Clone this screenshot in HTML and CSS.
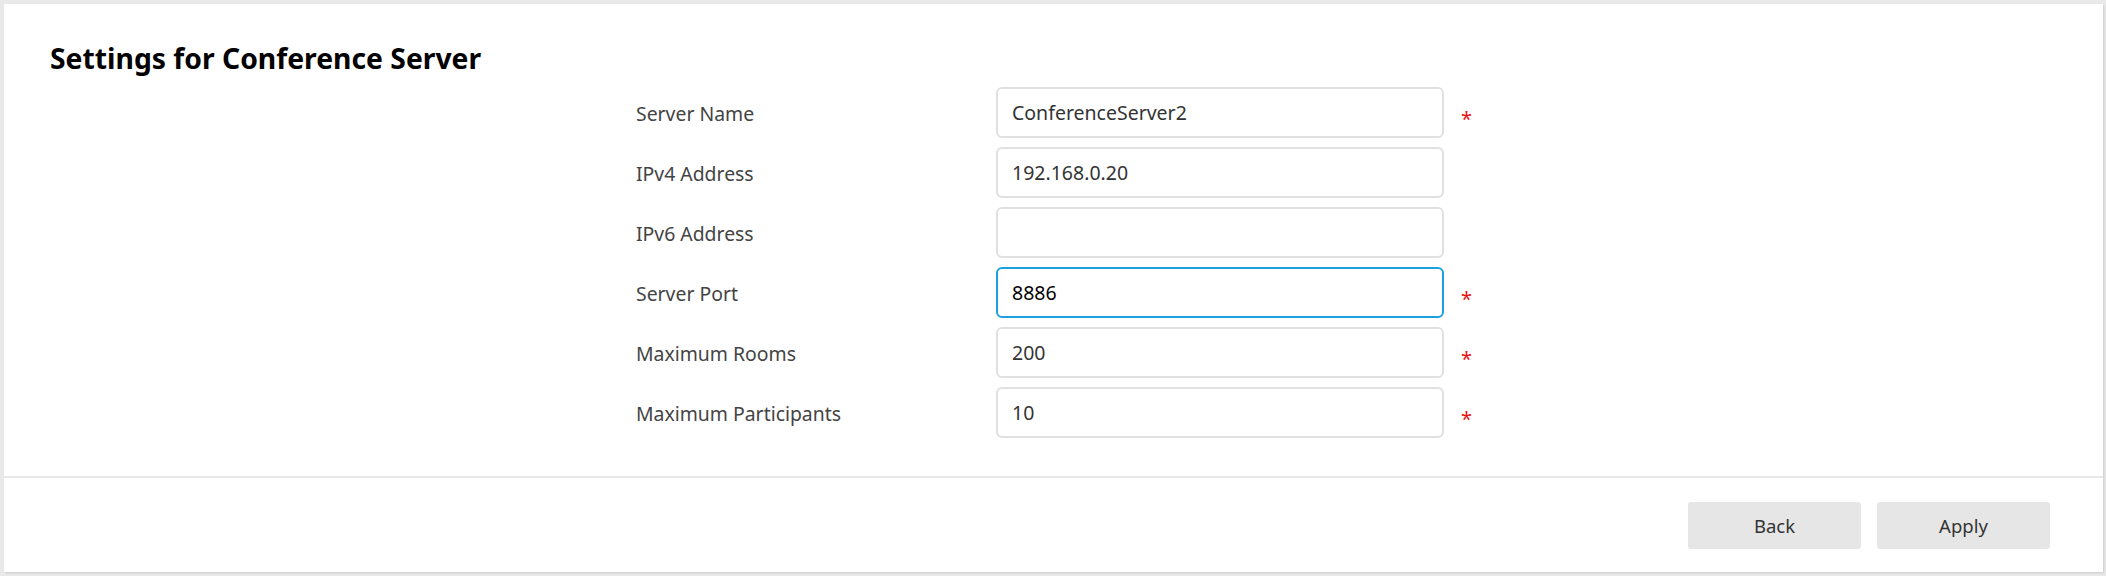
FILE: index.html
```html
<!DOCTYPE html>
<html lang="en">
<head>
<meta charset="utf-8">
<title>Settings for Conference Server</title>
<link rel="stylesheet" href="styles.css">
</head>
<body>
<div class="panel">
  <div class="content">
    <h1 class="title">Settings for Conference Server</h1>
    <form class="form">
      <label class="label" for="f1">Server Name</label>
      <input class="input" id="f1" type="text" value="ConferenceServer2">
      <span class="req">*</span>

      <label class="label" for="f2">IPv4 Address</label>
      <input class="input" id="f2" type="text" value="192.168.0.20">
      <span class="req"></span>

      <label class="label" for="f3">IPv6 Address</label>
      <input class="input" id="f3" type="text" value="">
      <span class="req"></span>

      <label class="label" for="f4">Server Port</label>
      <input class="input input-focus" id="f4" type="text" value="8886">
      <span class="req">*</span>

      <label class="label" for="f5">Maximum Rooms</label>
      <input class="input" id="f5" type="text" value="200">
      <span class="req">*</span>

      <label class="label" for="f6">Maximum Participants</label>
      <input class="input" id="f6" type="text" value="10">
      <span class="req">*</span>
    </form>
  </div>
  <div class="footer">
    <button class="btn" type="button">Back</button>
    <button class="btn" type="button">Apply</button>
  </div>
</div>
</body>
</html>
```
FILE: styles.css
```css
* { box-sizing: border-box; }
html, body {
  margin: 0;
  padding: 0;
  background: #e9e9e9;
  font-family: "Noto Sans", "Open Sans", sans-serif;
}
body { padding: 4px; height: 576px; }
.panel {
  width: 2099px;
  height: 568px;
  background: #fff;
  box-shadow: 1px 1px 2px rgba(0,0,0,0.12);
  display: flex;
  flex-direction: column;
}
.content {
  height: 474px;
  border-bottom: 2px solid #e8e8e8;
}
.title {
  margin: 0;
  padding: 35px 0 0 46px;
  font-size: 28.3px;
  line-height: 38px;
  font-weight: 700;
  color: #000;
}
.form {
  margin-top: 10px;
  padding-left: 3px;
  display: grid;
  grid-template-columns: 360px 448px 30px;
  grid-auto-rows: 51px;
  row-gap: 9px;
  justify-content: center;
  align-items: center;
}
.label {
  font-size: 19.4px;
  color: #444;
  padding-top: 1px;
}
.input {
  height: 51px;
  width: 448px;
  border: 2px solid #e0e0e0;
  border-radius: 6px;
  padding: 0 14px;
  font-family: inherit;
  font-size: 19.5px;
  color: #333;
  background: #fff;
  outline: none;
}
.input-focus {
  border-color: #1ba1e2;
  color: #000;
}
.req {
  color: #ee1111;
  font-size: 20px;
  padding-left: 17px;
  padding-top: 12px;
}
.footer {
  flex: 1;
  display: flex;
  justify-content: flex-end;
  align-items: center;
  gap: 16px;
  padding-right: 53px;
}
.btn {
  width: 173px;
  height: 47px;
  border: none;
  border-radius: 3px;
  background: #e6e6e6;
  color: #333;
  font-family: inherit;
  font-size: 18.5px;
}
```
